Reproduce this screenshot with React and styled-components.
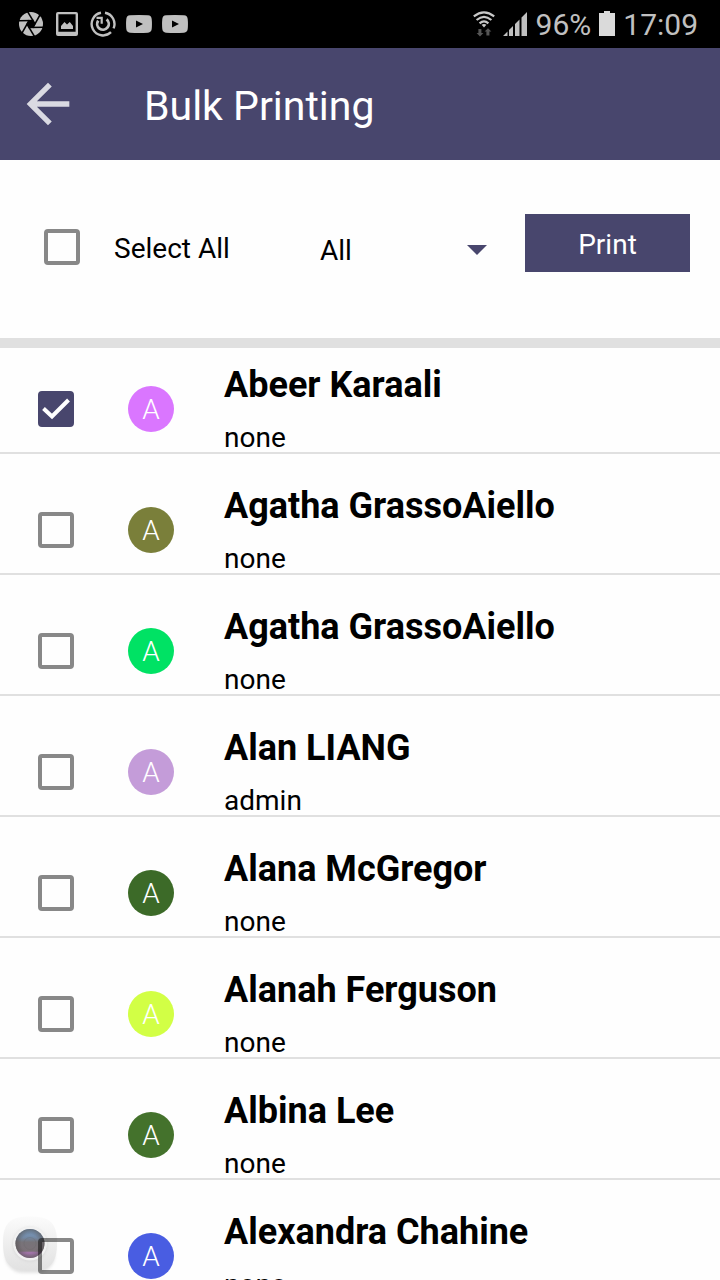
import React, { useState } from "react";
import styled, { createGlobalStyle } from "styled-components";

const Global = createGlobalStyle`
  * { box-sizing: border-box; }
  body { margin: 0; background: #fefefe; }
  body, button, select, input { font-family: Roboto, "Liberation Sans", sans-serif; }
`;

const INDIGO = "#48466d";

const Screen = styled.div`
  display: flex;
  flex-direction: column;
  height: 100vh;
  overflow: hidden;
  background: #fefefe;
  color: #000;
`;

const StatusBar = styled.div`
  display: flex;
  flex: none;
  align-items: center;
  justify-content: space-between;
  height: 48px;
  padding: 2px 22px 0 18px;
  background: #000;
  color: #c0c0c0;
  font-size: 30px;
  line-height: 46px;
`;

const StatusGroup = styled.div`
  display: flex;
  align-items: center;
  gap: ${(p) => p.$gap}px;
`;

const StatusIcon = styled.svg`
  display: block;
  flex: none;
  margin-bottom: 2px;
`;

const AppBar = styled.header`
  display: flex;
  flex: none;
  align-items: center;
  gap: 64px;
  height: 112px;
  padding: 0 16px;
  background: ${INDIGO};
  color: #fff;
`;

const BackButton = styled.button`
  display: flex;
  padding: 0;
  border: 0;
  background: none;
  color: #dadae2;
`;

const Title = styled.h1`
  margin: 4px 0 0;
  font-size: 41px;
  font-weight: 400;
  line-height: 48px;
`;

const Toolbar = styled.div`
  display: flex;
  flex: none;
  align-items: flex-start;
  padding: 54px 30px 52px 44px;
  border-bottom: 10px solid #e0e0e0;
`;

const SelectAll = styled.label`
  display: flex;
  flex: none;
  align-items: center;
  gap: 34px;
  width: 276px;
  height: 66px;
  font-size: 28px;
  line-height: 32px;
`;

const SelectAllText = styled.span`
  padding-top: 4px;
`;

const Filter = styled.div`
  display: grid;
  flex: 1;
  align-items: center;
  min-width: 0;
  height: 72px;
  margin-right: 38px;

  > * { grid-area: 1 / 1; }
  > svg { justify-self: end; pointer-events: none; }
`;

const FilterSelect = styled.select`
  appearance: none;
  width: 100%;
  height: 40px;
  padding: 0;
  border: 0;
  background: none;
  color: #000;
  font-size: 28px;
`;

const PrintButton = styled.button`
  flex: none;
  width: 165px;
  height: 58px;
  padding: 2px 0 0;
  border: 0;
  background: ${INDIGO};
  color: #fff;
  font-size: 28px;
`;

const CheckFrame = styled.span`
  display: grid;
  flex: none;

  > * { grid-area: 1 / 1; }
  > svg { pointer-events: none; }
`;

const CheckInput = styled.input`
  appearance: none;
  width: 36px;
  height: 36px;
  margin: 0;
  border: 4px solid #888;
  border-radius: 4px;

  &:checked {
    border-color: ${INDIGO};
    background: ${INDIGO};
  }
`;

const List = styled.ul`
  display: flex;
  flex: 1;
  flex-direction: column;
  gap: 15px;
  min-height: 0;
  margin: 0;
  padding: 0;
  overflow-y: auto;
  scrollbar-width: none;
  list-style: none;
`;

const Row = styled.li`
  flex: none;
  border-bottom: 2px solid #e0e0e0;
`;

const RowLabel = styled.label`
  display: flex;
  align-items: center;
  padding: 18px 38px 0;
`;

const Avatar = styled.span`
  flex: none;
  width: 46px;
  height: 46px;
  margin: 0 50px 0 54px;
  border-radius: 50%;
  background: ${(p) => p.$color};
  color: #fff;
  font-size: 28px;
  font-weight: 300;
  line-height: 48px;
  text-align: center;
`;

const Person = styled.span`
  display: flex;
  flex-direction: column;
  gap: 20px;
`;

const Name = styled.span`
  font-size: 36px;
  font-weight: 700;
  line-height: 38px;
`;

const Role = styled.span`
  font-size: 28px;
  line-height: 28px;
`;

const CaptureBubble = styled.svg`
  position: fixed;
  bottom: 0;
  left: 0;
  mix-blend-mode: multiply;
  pointer-events: none;
`;

function Checkbox({ checked, onChange }) {
  return (
    <CheckFrame>
      <CheckInput type="checkbox" checked={checked} onChange={onChange} />
      {checked && (
        <svg width="36" height="36" viewBox="0 0 36 36" aria-hidden="true">
          <path d="M5.5 17.5 14 25.5 30.5 9" fill="none" stroke="#fff" strokeWidth="4" />
        </svg>
      )}
    </CheckFrame>
  );
}

function VideoIcon() {
  return (
    <StatusIcon width="26" height="18" viewBox="0 0 26 18" aria-hidden="true">
      <path d="M4 .3Q13-.2 22 .3 25.4 .6 25.7 4 26.2 9 25.7 14 25.4 17.4 22 17.7 13 18.2 4 17.7.6 17.4.3 14-.2 9 .3 4 .6.6 4 .3Z" fill="#c0c0c0" />
      <path d="M10 5.6v7L17 9Z" fill="#000" />
    </StatusIcon>
  );
}

const blades = [0, 60, 120, 180, 240, 300];

function LeftIcons() {
  return (
    <StatusGroup $gap={10}>
      <StatusIcon width="26" height="26" viewBox="0 0 26 26" aria-hidden="true">
        <circle cx="13" cy="13" r="12" fill="#c0c0c0" />
        <path d="m13 9 3.5 2v4L13 17l-3.5-2v-4Z" fill="#000" />
        {blades.map((a) => (
          <path key={a} d="M16.5 15.5 16.2 0" stroke="#000" strokeWidth="1.6" transform={`rotate(${a - 30} 13 13)`} />
        ))}
      </StatusIcon>
      <StatusIcon width="26" height="26" viewBox="0 0 26 26" aria-hidden="true">
        <path d="M4 1h18q2 0 2 2v20q0 2-2 2H4q-2 0-2-2V3q0-2 2-2Zm.4 2.2v17.6h17.2V3.2Z" fill="#c0c0c0" fillRule="evenodd" />
        <path d="M7 18v-3l3.500-4 2.500 2.400 2.800-2.400 3.200 4v3Z" fill="#c0c0c0" />
      </StatusIcon>
      <StatusIcon width="26" height="26" viewBox="0 0 26 26" fill="none" stroke="#c0c0c0" aria-hidden="true">
        <path d="M11 1.8A11.4 11.4 0 1 0 21 21.2M15 1.8A11.4 11.4 0 0 1 23.6 17.4" strokeWidth="2.4" />
        <path d="M8.2 9.6A5.8 5.8 0 1 0 16.6 8.4" strokeWidth="2.8" />
        <path d="M6.5 6.8h5.2v6" strokeWidth="2.2" />
      </StatusIcon>
      <VideoIcon />
      <VideoIcon />
    </StatusGroup>
  );
}

function RightIcons() {
  return (
    <StatusGroup $gap={8}>
      <StatusIcon width="22" height="26" viewBox="0 0 22 26" aria-hidden="true">
        <g fill="none" stroke="#c8c8c8" strokeWidth="2.2">
          <path d="M.8 5.400Q11-2.600 21.200 5.400" />
          <path d="M3.600 9Q11 2.600 18.400 9" />
          <path d="M6.600 12.400Q11 8.400 15.400 12.400" />
        </g>
        <path d="M8.600 13.800Q11 12 13.400 13.800L11 16.400Z" fill="#c8c8c8" />
        <path d="M5.400 18h3v4h2L7 25.400 3.600 22h1.800ZM13.400 24.600h3v-4h2L15 17.2 11.600 20.600h1.800Z" fill="#555" />
      </StatusIcon>
      <StatusIcon width="25" height="26" viewBox="0 0 25 26" fill="#c0c0c0" aria-hidden="true">
        <path d="M0 25 4.500 20.500V25ZM6 25v-6l4-4V25ZM12 25V13l4.500-4.500V25ZM18.500 25V6.500L24 1v24Z" />
      </StatusIcon>
      <span>96%</span>
      <StatusIcon width="16" height="26" viewBox="0 0 16 26" fill="#dadada" aria-hidden="true">
        <path d="M5 0h6v2h5v23H0V2h5Z" />
      </StatusIcon>
      <span>17:09</span>
    </StatusGroup>
  );
}

const people = [
  { name: "Abeer Karaali", role: "none", color: "#da76ff" },
  { name: "Agatha GrassoAiello", role: "none", color: "#7a7f3a" },
  { name: "Agatha GrassoAiello", role: "none", color: "#00e264" },
  { name: "Alan LIANG", role: "admin", color: "#c49cd9" },
  { name: "Alana McGregor", role: "none", color: "#3c6a28" },
  { name: "Alanah Ferguson", role: "none", color: "#d2ff45" },
  { name: "Albina Lee", role: "none", color: "#44722c" },
  { name: "Alexandra Chahine", role: "none", color: "#495de2" },
];

export default function App() {
  const [selected, setSelected] = useState(() => people.map((_, i) => i === 0));
  const all = selected.every(Boolean);

  return (
    <Screen>
      <Global />
      <StatusBar>
        <LeftIcons />
        <RightIcons />
      </StatusBar>
      <AppBar>
        <BackButton type="button" aria-label="Back">
          <svg width="64" height="64" viewBox="0 0 24 24" fill="currentColor" aria-hidden="true">
            <path d="M20 11H7.83l5.59-5.59L12 4l-8 8 8 8 1.41-1.41L7.83 13H20v-2z" />
          </svg>
        </BackButton>
        <Title>Bulk Printing</Title>
      </AppBar>
      <Toolbar>
        <SelectAll>
          <Checkbox checked={all} onChange={() => setSelected(people.map(() => !all))} />
          <SelectAllText>Select All</SelectAllText>
        </SelectAll>
        <Filter>
          <FilterSelect aria-label="Filter">
            <option>All</option>
          </FilterSelect>
          <svg width="20" height="10" viewBox="0 0 20 10" aria-hidden="true">
            <path d="M0 0h20L10 10Z" fill={INDIGO} />
          </svg>
        </Filter>
        <PrintButton type="button">Print</PrintButton>
      </Toolbar>
      <List>
        {people.map((p, i) => (
          <Row key={i}>
            <RowLabel>
              <Checkbox
                checked={selected[i]}
                onChange={() => setSelected(selected.map((s, j) => (j === i ? !s : s)))}
              />
              <Avatar $color={p.color}>A</Avatar>
              <Person>
                <Name>{p.name}</Name>
                <Role>{p.role}</Role>
              </Person>
            </RowLabel>
          </Row>
        ))}
      </List>
      <CaptureBubble width="64" height="68" viewBox="0 0 64 68" aria-hidden="true">
        <defs>
          <linearGradient id="shell" x1="0" y1="0" x2="0" y2="1">
            <stop offset="0" stopColor="#fcfcfc" />
            <stop offset="1" stopColor="#e2e2e2" />
          </linearGradient>
          <linearGradient id="lens" x1="0" y1="0" x2="0" y2="1">
            <stop offset="0" stopColor="#7aa2ca" />
            <stop offset=".3" stopColor="#7389a4" />
            <stop offset=".45" stopColor="#777379" />
            <stop offset=".76" stopColor="#7b7178" />
            <stop offset=".82" stopColor="#ad76b6" />
            <stop offset="1" stopColor="#a07aa5" />
          </linearGradient>
          <radialGradient id="rim">
            <stop offset=".6" stopColor="#5a5658" stopOpacity="0" />
            <stop offset="1" stopColor="#5a5658" stopOpacity=".7" />
          </radialGradient>
          <filter id="soft" x="-20%" y="-20%" width="140%" height="140%">
            <feGaussianBlur stdDeviation="1.5" />
          </filter>
        </defs>
        <rect x="5" y="9" width="50" height="52" rx="18" fill="#bbb" opacity=".4" filter="url(#soft)" />
        <path d="M30 4.500C50 4.500 57 11 57 31S50 59 30 59 3 51 3 31 10 4.500 30 4.500Z" fill="url(#shell)" />
        <circle cx="30" cy="32.500" r="17" fill="#d8d8d8" filter="url(#soft)" />
        <circle cx="30" cy="31.500" r="17" fill="#f2f2f2" />
        <circle cx="30" cy="31.500" r="14.500" fill="url(#lens)" />
        <circle cx="30" cy="31.500" r="14.500" fill="url(#rim)" />
        <circle cx="30" cy="31.500" r="6" fill="none" stroke="#666" opacity=".3" />
      </CaptureBubble>
    </Screen>
  );
}
